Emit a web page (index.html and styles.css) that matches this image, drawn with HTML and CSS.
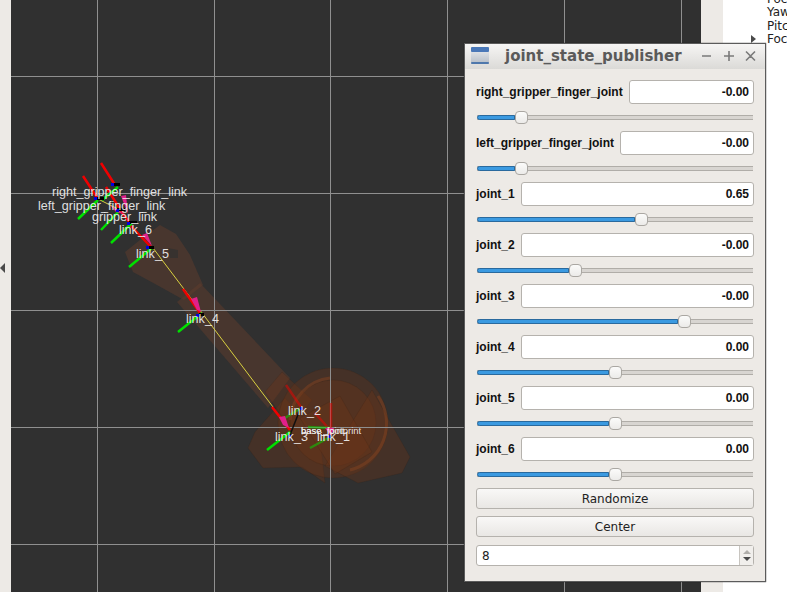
FILE: index.html
```html
<!DOCTYPE html>
<html lang="en">
<head>
  <meta charset="UTF-8" />
  <meta name="viewport" content="width=device-width, initial-scale=1.0"/>
  <title>joint_state_publisher</title>
  <link rel="stylesheet" href="styles.css">
</head>
<body>
  <div class="app">
    <div class="side-strip"><span class="collapse-arrow"></span></div>

    <div class="viewport">
      <svg class="scene" width="690" height="592" viewBox="11 0 690 592">
        <!-- robot body -->
        <g class="arm">
          <path d="M160 225 L176 234 L190 255 L203 285 L184 300 L157 285 L133 272 L125 252 L140 240 Z"/>
          <path d="M200 283 L290 378 L268 408 L177 302 Z"/>
          <path d="M168 248 L178 250 L178 258 L170 258 Z" class="gap"/>
        </g>
        <g class="base">
          <path d="M255 432 L285 398 L320 440 L325 483 L302 467 L263 468 L248 448 Z"/>
          <path d="M265 392 L282 372 L312 400 L290 428 Z"/>
          <circle cx="333" cy="423" r="55"/>
          <circle cx="333" cy="423" r="43"/>
          <path d="M372 390 L410 457 L402 473 L358 483 L325 466 Z"/>
          <path d="M300 418 L340 396 L372 452 L335 474 Z"/>
        </g>
        <g class="base-rim">
          <path d="M378 396 A 48 48 0 0 1 350 470"/>
          <path d="M330 378 A 45 45 0 0 0 290 420"/>
        </g>

        <!-- grid -->
        <g class="grid">
          <path d="M97.5 0V592M214.5 0V592M330.5 0V592M447.5 0V592M564.5 0V592M681.5 0V592"/>
          <path d="M11 76.5H701M11 193.5H701M11 310.5H701M11 427.5H701M11 544.5H701"/>
        </g>

        <!-- links between frames -->
        <path class="tf-link" d="M153 248 L273 407"/>
        <path class="tf-link" d="M98 199 L120 210"/>
        <path class="tf-black" d="M290 435 L301 407"/>

        <!-- frame axes -->
        <g class="axis-x">
          <path d="M101 163 L115 185M83 176 L98 199M106 187 L120 209M120 210 L130 223M130 225 L152 248M183 289 L200 313M272 407 L290 430"/>
        </g>
        <g class="axis-x faded">
          <path d="M286 385 L301 407M331 403 L331 430M315 413 L330 430"/>
        </g>
        <g class="axis-y">
          <path d="M118 187 L102 200M98 200 L78 219M120 210 L101 230M132 223 L111 243M152 248 L129 267M202 313 L178 332M290 432 L267 450"/>
        </g>
        <g class="axis-y faded">
          <path d="M301 408 L285 418M330 437 L310 448M330 428 L308 427"/>
        </g>
        <g class="arrows">
          <path d="M121 196 L126 195 L128 214 Z"/>
          <path d="M110 205 L124 214 L116 212 Z"/>
          <path d="M142 235 L147 233 L152 246 Z"/>
          <path d="M191 299 L197 297 L201 312 L197 310 Z"/>
          <path d="M279 417 L285 416 L289 428 L283 425 Z"/>
          <path d="M325 428 L334 428 L331 436 Z"/>
        </g>
        <g class="origins">
          <path d="M112 184.5H120M96 198.5H104M117 209.5H125M129 222.5H137M149 247.5H154M199 314.5H204"/>
        </g>
        <g class="dots">
          <rect x="111" y="183" width="3" height="3"/>
          <rect x="94" y="197" width="3" height="3"/>
          <rect x="116" y="209" width="3" height="3"/>
          <rect x="127" y="222" width="3" height="3"/>
          <rect x="146" y="246" width="3" height="3"/>
          <rect x="196" y="314" width="3" height="3"/>
          <rect x="288" y="435" width="3" height="3"/>
          <rect x="300" y="407" width="3" height="3"/>
          <rect x="328" y="435" width="3" height="3"/>
        </g>

        <!-- frame names -->
        <g class="labels">
          <text x="52" y="196">right_gripper_finger_link</text>
          <text x="38" y="210">left_gripper_finger_link</text>
          <text x="92" y="221">gripper_link</text>
          <text x="119" y="234">link_6</text>
          <text x="136" y="258">link_5</text>
          <text x="186" y="323">link_4</text>
          <text x="288" y="415">link_2</text>
          <text x="275" y="441">link_3</text>
          <text x="317" y="441">link_1</text>
          <text class="small" x="301" y="434">base_footprint</text>
          <text class="small" x="301" y="434">base_joint</text>
        </g>
      </svg>
    </div>

    <div class="splitter"></div>

    <div class="tree">
      <div class="tree-row">Foc</div>
      <div class="tree-row">Yaw</div>
      <div class="tree-row">Pitc</div>
      <div class="tree-row"><span class="tree-arrow"></span>Foc</div>
    </div>
  </div>

  <div class="window">
    <div class="titlebar">
      <svg class="win-icon" width="18" height="17" viewBox="0 0 18 17">
        <defs>
          <linearGradient id="iconBody" x1="0" y1="0" x2="0" y2="1">
            <stop offset="0" stop-color="#eef0f2"/>
            <stop offset="1" stop-color="#b4bcc6"/>
          </linearGradient>
        </defs>
        <rect x="0" y="0" width="18" height="17" rx="1.5" fill="url(#iconBody)"/>
        <rect x="0" y="0" width="18" height="5" rx="1" fill="#4a78b8"/>
        <rect x="0" y="15" width="18" height="2" rx="1" fill="#4f78ac"/>
      </svg>
      <span class="win-title">joint_state_publisher</span>
      <svg class="win-buttons" width="58" height="12" viewBox="0 0 58 12">
        <path d="M3 6H12M25 6H35M30 1V11M47 1.5L56 10.5M56 1.5L47 10.5"/>
      </svg>
    </div>

    <div class="content">
      <div class="joint">
        <div class="field"><label>right_gripper_finger_joint</label><input class="value" value="-0.00"></div>
        <div class="slider"><div class="fill" style="width: 38px"></div><div class="thumb"></div></div>
      </div>
      <div class="joint">
        <div class="field"><label>left_gripper_finger_joint</label><input class="value" value="-0.00"></div>
        <div class="slider"><div class="fill" style="width: 38px"></div><div class="thumb"></div></div>
      </div>
      <div class="joint">
        <div class="field"><label>joint_1</label><input class="value" value="0.65"></div>
        <div class="slider"><div class="fill" style="width: 158px"></div><div class="thumb"></div></div>
      </div>
      <div class="joint">
        <div class="field"><label>joint_2</label><input class="value" value="-0.00"></div>
        <div class="slider"><div class="fill" style="width: 92px"></div><div class="thumb"></div></div>
      </div>
      <div class="joint">
        <div class="field"><label>joint_3</label><input class="value" value="-0.00"></div>
        <div class="slider"><div class="fill" style="width: 201px"></div><div class="thumb"></div></div>
      </div>
      <div class="joint">
        <div class="field"><label>joint_4</label><input class="value" value="0.00"></div>
        <div class="slider"><div class="fill" style="width: 132px"></div><div class="thumb"></div></div>
      </div>
      <div class="joint">
        <div class="field"><label>joint_5</label><input class="value" value="0.00"></div>
        <div class="slider"><div class="fill" style="width: 132px"></div><div class="thumb"></div></div>
      </div>
      <div class="joint">
        <div class="field"><label>joint_6</label><input class="value" value="0.00"></div>
        <div class="slider"><div class="fill" style="width: 132px"></div><div class="thumb"></div></div>
      </div>

      <button class="btn">Randomize</button>
      <button class="btn">Center</button>

      <div class="spin">
        <input class="spin-input" value="8">
        <div class="spin-arrows">
          <span class="spin-up"></span>
          <span class="spin-down"></span>
        </div>
      </div>
    </div>
  </div>
</body>
</html>
```

FILE: styles.css
```css
html, body { margin: 0; height: 100%; overflow: hidden; }
body { font-family: "DejaVu Sans", sans-serif; background: #edeae6; }

.app { display: flex; height: 592px; }

.side-strip { width: 11px; flex: none; background: #edeae6; }
.collapse-arrow {
  display: block;
  width: 0;
  height: 0;
  margin-top: 263px;
  border-top: 5px solid transparent;
  border-bottom: 5px solid transparent;
  border-right: 5px solid #4a4a4a;
}

.viewport { width: 690px; flex: none; background: #303030; }
.scene { display: block; }

.splitter { width: 22px; flex: none; background: #edeae6; border-right: 1px solid #cbc8c3; margin-right: -1px; }

.tree {
  flex: 1;
  background: #fff;
  overflow: hidden;
  font-size: 12px;
  color: #222;
  white-space: nowrap;
}
.tree-row {
  display: flex;
  align-items: center;
  height: 13.5px;
  padding-left: 44px;
  position: relative;
}
.tree-row:first-child { margin-top: -8px; }
.tree-arrow {
  position: absolute;
  left: 28px;
  top: 2px;
  width: 0;
  height: 0;
  border-top: 4px solid transparent;
  border-bottom: 4px solid transparent;
  border-left: 5px solid #4a4a4a;
}

/* floating window */
.window {
  position: absolute;
  left: 464px;
  top: 43px;
  width: 300px;
  height: 537px;
  background: #edeae6;
  border: 1px solid #5b5b5b;
  box-shadow: 0 0 1px #222;
}
.titlebar {
  display: flex;
  align-items: center;
  height: 23px;
  padding: 0 8px 2px 6px;
  background: linear-gradient(#f6f5f4, #dbdad7);
}
.win-icon { flex: none; }
.win-title {
  flex: 1;
  margin-left: 16px;
  font-size: 15px;
  font-weight: bold;
  color: #5a5a5a;
}
.win-buttons path { fill: none; stroke: #7a7a7a; stroke-width: 1.6; }

.content { padding: 11px 11px 0; }

.joint { height: 51px; }
.field { display: flex; align-items: center; height: 24px; }
.field label {
  font: bold 12px "Liberation Sans", Arial, sans-serif;
  color: #111;
  margin-right: 6px;
  white-space: nowrap;
}
.value {
  flex: 1;
  min-width: 0;
  height: 24px;
  box-sizing: border-box;
  padding: 0 4px;
  border: 1px solid #b5b2ad;
  border-radius: 3px;
  background: #fff;
  text-align: right;
  font: bold 12px "Liberation Sans", Arial, sans-serif;
  color: #111;
}

.slider {
  display: flex;
  align-items: center;
  height: 27px;
  margin: 0 1px;
  background: linear-gradient(#b0ada8 1px, #d8d5d1 1px, #d8d5d1 4px, #b0ada8 4px) center / 100% 5px no-repeat;
}
.fill {
  height: 5px;
  box-sizing: border-box;
  background: #3b9ae1;
  border: 1px solid #2a6a9e;
  border-radius: 3px 0 0 3px;
}
.thumb {
  width: 13px;
  height: 13px;
  box-sizing: border-box;
  background: linear-gradient(#fbfbfa, #ecebe9);
  border: 1px solid #aaa7a2;
  border-radius: 4px;
}

.btn {
  display: block;
  width: 100%;
  height: 21px;
  margin: 0 0 7px;
  padding: 0;
  border: 1px solid #b5b2ad;
  border-radius: 3px;
  background: linear-gradient(#f9f8f7, #e9e7e4);
  font: 12px "DejaVu Sans", sans-serif;
  color: #222;
}

.spin {
  display: flex;
  height: 21px;
  margin-top: 8px;
  box-sizing: border-box;
  border: 1px solid #b5b2ad;
  border-radius: 3px;
  background: #fff;
}
.spin-input {
  flex: 1;
  min-width: 0;
  border: 0;
  padding: 0 5px;
  background: transparent;
  font: 12px "DejaVu Sans", sans-serif;
  color: #222;
}
.spin-arrows {
  width: 13px;
  display: flex;
  flex-direction: column;
  align-items: center;
  justify-content: center;
  gap: 3px;
  border-left: 1px solid #c8c5c0;
  background: #f1efec;
}
.spin-up, .spin-down { width: 0; height: 0; border-left: 4px solid transparent; border-right: 4px solid transparent; }
.spin-up { border-bottom: 4px solid #b0aeaa; }
.spin-down { border-top: 4px solid #4a4a4a; }

/* 3d scene */
.grid path { stroke: #8f8f8f; stroke-width: 1; fill: none; }
.arm > * { fill: #5f3c2c; fill-opacity: 0.5; }
.arm .gap { fill: #303030; fill-opacity: 0.7; }
.base > * { fill: #6e3618; fill-opacity: 0.34; stroke: #2e1a10; stroke-opacity: 0.15; }
.base-rim > * { fill: none; stroke: #8a4420; stroke-opacity: 0.45; stroke-width: 3; }
.tf-link { stroke: #d8d040; stroke-width: 1; fill: none; }
.tf-black { stroke: #111; stroke-width: 1.5; fill: none; }
.axis-x path { stroke: #f00000; stroke-width: 2.5; fill: none; }
.axis-y path { stroke: #00e000; stroke-width: 2.5; fill: none; }
.faded { opacity: 0.5; }
.arrows path { fill: #e0208a; }
.origins path { stroke: #000; stroke-width: 3; fill: none; }
.dots rect { fill: #0000e0; }
.labels text { font: 12.6px "Liberation Sans", Arial, sans-serif; fill: #f2f2f2; fill-opacity: 0.92; }
.labels .small { font-size: 9.5px; }
```
